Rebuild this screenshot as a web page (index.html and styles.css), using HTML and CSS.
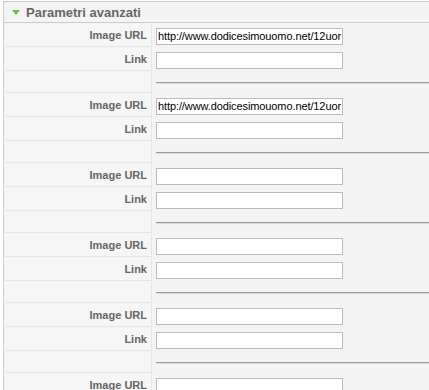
FILE: index.html
```html
<!DOCTYPE html>
<html lang="it">
<head>
  <meta charset="UTF-8">
  <title>Parametri avanzati</title>
  <link rel="stylesheet" href="styles.css">
</head>
<body>
<div class="panel">
  <h3 class="title">
    <svg class="arrow" width="8" height="6" viewBox="0 0 8 6"><path d="M0 0h8L4 5z" fill="#70c040"/></svg>
    <span>Parametri avanzati</span>
  </h3>
  <table class="paramlist">
    <tr><td class="key">Image URL</td><td class="val"><input type="text" value="http://www.dodicesimouomo.net/12uomo/images/banner.jpg"></td></tr>
    <tr><td class="key">Link</td><td class="val"><input type="text"></td></tr>
    <tr><td class="key spacer"></td><td class="val"><div class="sep"></div></td></tr>

    <tr><td class="key">Image URL</td><td class="val"><input type="text" value="http://www.dodicesimouomo.net/12uomo/images/banner2.jpg"></td></tr>
    <tr><td class="key">Link</td><td class="val"><input type="text"></td></tr>
    <tr><td class="key spacer"></td><td class="val"><div class="sep"></div></td></tr>

    <tr><td class="key">Image URL</td><td class="val"><input type="text"></td></tr>
    <tr><td class="key">Link</td><td class="val"><input type="text"></td></tr>
    <tr><td class="key spacer"></td><td class="val"><div class="sep"></div></td></tr>

    <tr><td class="key">Image URL</td><td class="val"><input type="text"></td></tr>
    <tr><td class="key">Link</td><td class="val"><input type="text"></td></tr>
    <tr><td class="key spacer"></td><td class="val"><div class="sep"></div></td></tr>

    <tr><td class="key">Image URL</td><td class="val"><input type="text"></td></tr>
    <tr><td class="key">Link</td><td class="val"><input type="text"></td></tr>
    <tr><td class="key spacer"></td><td class="val"><div class="sep"></div></td></tr>

    <tr><td class="key">Image URL</td><td class="val"><input type="text"></td></tr>
    <tr><td class="key">Link</td><td class="val"><input type="text"></td></tr>
  </table>
</div>
</body>
</html>
```

FILE: styles.css
```css
html, body { margin: 0; padding: 0; background: #fff; overflow: hidden; }
body { font-family: "Liberation Sans", Arial, sans-serif; font-size: 11px; color: #666; }

.panel {
  margin: 1px 0 0 3px;
  width: 520px;
  border: 1px solid #ccc;
  background: #f4f4f4;
}
.title {
  margin: 0;
  height: 20px;
  display: flex;
  align-items: center;
  gap: 6px;
  padding-left: 8px;
  font-size: 13px;
  font-weight: bold;
  color: #666;
  border-bottom: 1px solid #ccc;
}
.arrow { display: block; margin-top: 1px; }

.paramlist {
  border-collapse: separate;
  border-spacing: 1px;
  width: 100%;
}
.paramlist td { padding: 0; }
.key {
  width: 142px;
  height: 22px;
  padding: 0 4px 0 0 !important;
  text-align: right;
  font-weight: bold;
  color: #666;
  background: #f6f6f6;
  border-bottom: 1px solid #e6e6e6;
  border-right: 1px solid #e6e6e6;
}
.key.spacer { height: 20px; }
.val { padding: 0 0 0 3px !important; vertical-align: middle; }
.val input {
  display: block;
  box-sizing: border-box;
  width: 187px;
  height: 17px;
  margin: 1px 0 0;
  padding: 0 1px;
  border: 1px solid #bbb;
  background: #fff;
  font-family: "Liberation Sans", Arial, sans-serif;
  font-size: 11px;
  letter-spacing: -0.1px;
  color: #000;
}
.sep {
  border-top: 1px solid #999;
  border-bottom: 1px solid #ddd;
}
```
